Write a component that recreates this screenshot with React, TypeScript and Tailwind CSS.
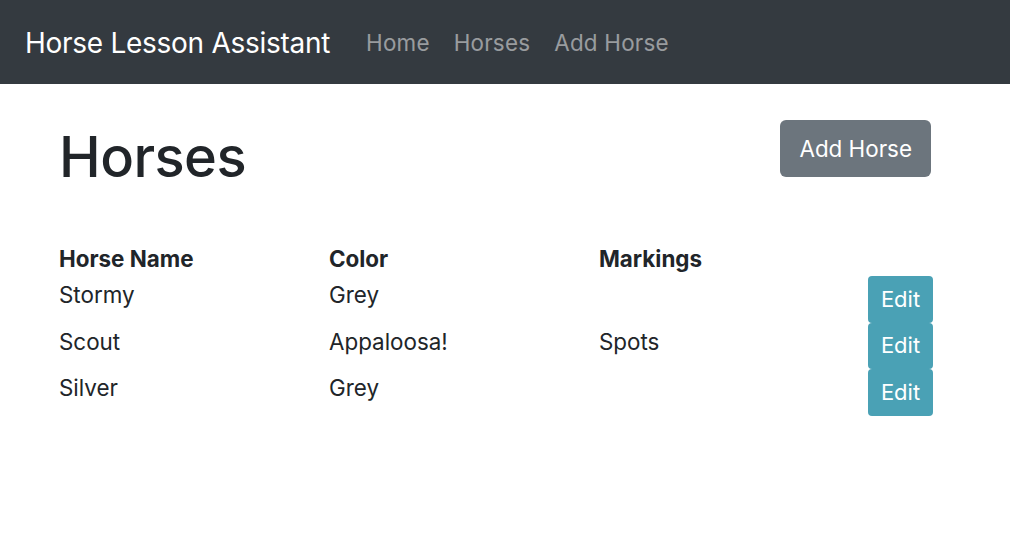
const horses = [
  { name: "Stormy", color: "Grey", markings: "" },
  { name: "Scout", color: "Appaloosa!", markings: "Spots" },
  { name: "Silver", color: "Grey", markings: "" },
];

const App = () => {
  return (
    <div className="min-h-[550px] bg-white text-[#212529] font-['Inter',sans-serif]">
      <nav className="h-[84px] bg-[#343a40] flex items-center px-[25px] pt-[2px]">
        <div className="text-[28px] text-white mr-[24px] tracking-[-0.01em]">Horse Lesson Assistant</div>
        <div className="flex text-[22.4px] text-white/50 tracking-[0.01em]">
          <a className="px-[12px]">Home</a>
          <a className="px-[12px]">Horses</a>
          <a className="px-[12px]">Add Horse</a>
        </div>
      </nav>
      <div className="pl-[59px] pr-[77px] pt-[36px]">
        <div className="flex justify-between items-start">
          <h1 className="text-[56px] font-medium leading-[1.2] mt-[4px] tracking-[-0.01em]">Horses</h1>
          <button className="mr-[2px] h-[57px] px-[19px] bg-[#6c757d] text-white text-[22.4px] rounded-[6px]">
            Add Horse
          </button>
        </div>
        <div className="mt-[51px] grid grid-cols-[270px_270px_1fr_auto] text-[22.4px]">
          <div className="font-bold h-[34px] leading-[34px]">Horse Name</div>
          <div className="font-bold h-[34px] leading-[34px]">Color</div>
          <div className="font-bold h-[34px] leading-[34px]">Markings</div>
          <div></div>
          {horses.map((h, i) => (
            <div key={i} className="contents">
              <div className="h-[46.5px] leading-[34px] pt-[2px]">{h.name}</div>
              <div className="h-[46.5px] leading-[34px] pt-[2px]">{h.color}</div>
              <div className="h-[46.5px] leading-[34px] pt-[2px]">{h.markings}</div>
              <div className="h-[46.5px]">
                <button className="w-[65px] h-[46.5px] bg-[#4aa1b5] text-white text-[22px] rounded-[4px]">Edit</button>
              </div>
            </div>
          ))}
        </div>
      </div>
    </div>
  );
};

export default App;
